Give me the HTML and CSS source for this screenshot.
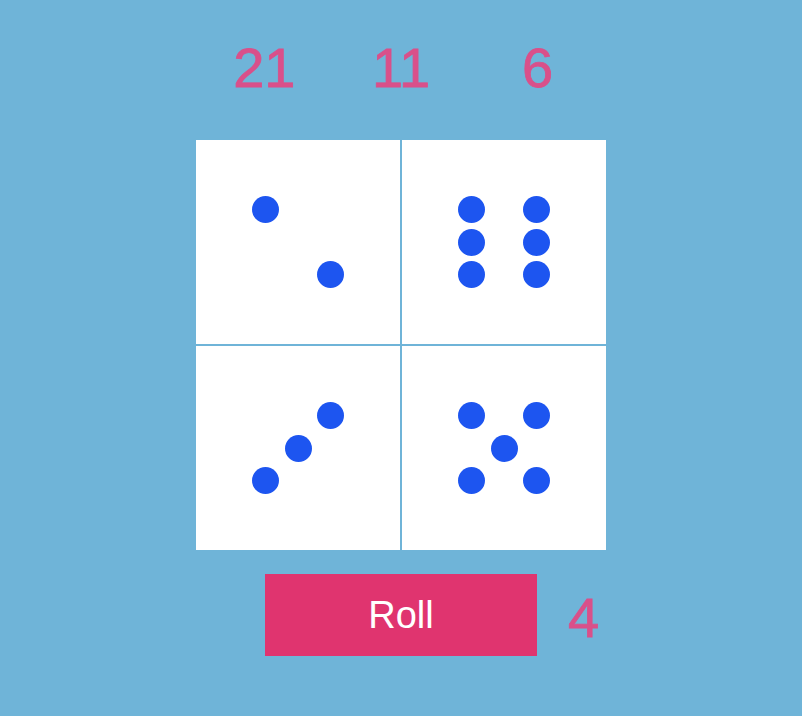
FILE: index.html
```html
<!DOCTYPE html>
<html>
<head>
<title>Dice</title>
<link rel="stylesheet" href="styles.css">
</head>
<body>

<div class="game">

<!-- running totals -->
<div class="scores">
  <div class="score">21</div>
  <div class="score">11</div>
  <div class="score">6</div>
</div>

<!-- the four dice, pips laid on a 3x3 grid -->
<div class="board">
  <div class="die">
    <span class="pip" style="grid-area: 1 / 1"></span>
    <span class="pip" style="grid-area: 3 / 3"></span>
  </div>
  <div class="die">
    <span class="pip" style="grid-area: 1 / 1"></span>
    <span class="pip" style="grid-area: 1 / 3"></span>
    <span class="pip" style="grid-area: 2 / 1"></span>
    <span class="pip" style="grid-area: 2 / 3"></span>
    <span class="pip" style="grid-area: 3 / 1"></span>
    <span class="pip" style="grid-area: 3 / 3"></span>
  </div>
  <div class="die">
    <span class="pip" style="grid-area: 1 / 3"></span>
    <span class="pip" style="grid-area: 2 / 2"></span>
    <span class="pip" style="grid-area: 3 / 1"></span>
  </div>
  <div class="die">
    <span class="pip" style="grid-area: 1 / 1"></span>
    <span class="pip" style="grid-area: 1 / 3"></span>
    <span class="pip" style="grid-area: 2 / 2"></span>
    <span class="pip" style="grid-area: 3 / 1"></span>
    <span class="pip" style="grid-area: 3 / 3"></span>
  </div>
</div>

<div class="controls">
  <button class="roll">Roll</button>
  <div class="score turn">4</div>
</div>

</div>

</body>
</html>
```

FILE: styles.css
```css
/* Dice roller */

body
{ margin: 0;
  background-color: #6fb4d8;
  font-family: "Liberation Sans", Arial, sans-serif;
}

div.game
{ display: flex;
  flex-direction: column;
  align-items: center;
  padding-top: 40px;
}

div.scores
{ display: grid;
  grid-template-columns: repeat(3, 1fr);
  width: 410px;
}

div.score
{ text-align: center;
  font-size: 56px;
  line-height: 56px;
  color: #d9508a;
  -webkit-text-stroke: 0.8px #d9508a;
}

div.board
{ display: grid;
  grid-template-columns: 204px 204px;
  grid-template-rows: 204px 204px;
  gap: 2px;
  margin-top: 44px;
}

div.die
{ background-color: white;
  display: grid;
  grid-template-columns: repeat(3, 32.5px);
  grid-template-rows: repeat(3, 32.5px);
  align-content: center;
  justify-content: center;
}

span.pip
{ width: 27px;
  height: 27px;
  border-radius: 50%;
  background-color: #1d55f0;
  place-self: center;
}

div.controls
{ display: grid;
  grid-template-columns: 1fr 272px 1fr;
  align-items: center;
  width: 410px;
  margin-top: 24px;
}

button.roll
{ grid-column: 2;
  height: 82px;
  border: none;
  padding: 0;
  background-color: #e0346f;
  color: white;
  font-family: inherit;
  font-size: 38px;
}

div.turn
{ justify-self: start;
  margin-left: 31px;
  padding-top: 6px;
}
```
